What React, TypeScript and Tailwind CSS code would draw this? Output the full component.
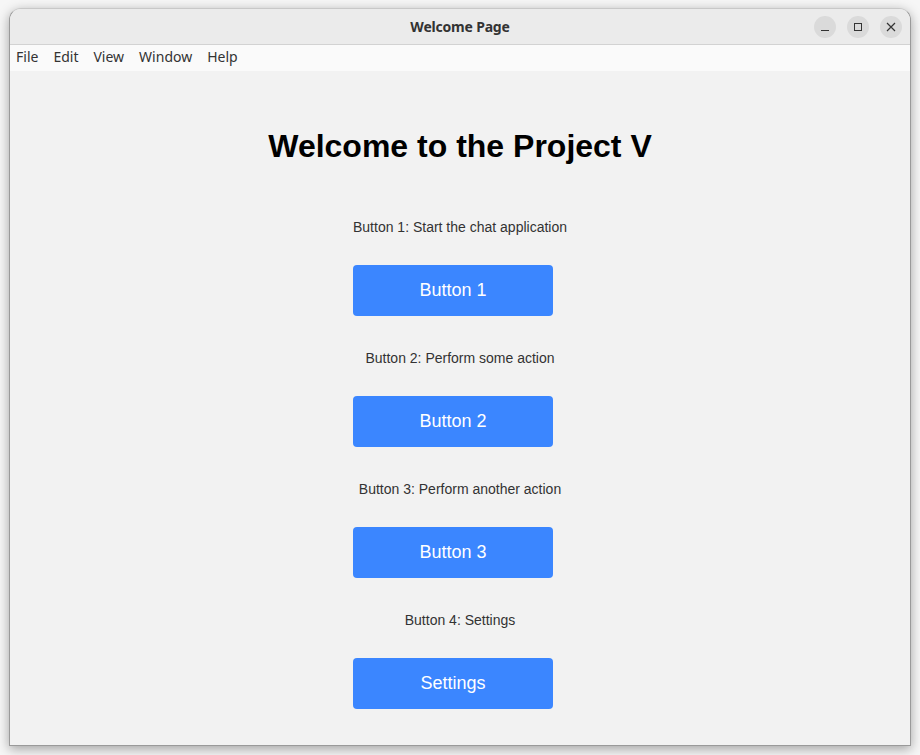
const items = [
  { label: "Button 1: Start the chat application", text: "Button 1" },
  { label: "Button 2: Perform some action", text: "Button 2" },
  { label: "Button 3: Perform another action", text: "Button 3" },
  { label: "Button 4: Settings", text: "Settings" },
];

const menus = ["File", "Edit", "View", "Window", "Help"];

export default function App() {
  return (
    <div className="h-[755px] w-[920px] overflow-hidden bg-[#f6f6f6] pl-[9px] pt-[8px]">
      <div className="flex h-[738px] w-[902px] flex-col overflow-hidden rounded-t-[12px] border border-[#9a9a9a] border-t-[#c8c8c8] bg-[#f2f2f2] shadow-[0_3px_12px_rgba(0,0,0,0.35)]">
        {/* title bar */}
        <div className="relative flex h-[36px] shrink-0 items-center justify-center border-b border-[#d2d2d2] bg-[#ebebeb]">
          <span className="font-['Noto_Sans',sans-serif] text-[14px] font-bold tracking-[-0.2px] text-[#333]">
            Welcome Page
          </span>
          <div className="absolute right-[8px] top-[7px] flex gap-[11px]">
            <div className="flex h-[22px] w-[22px] items-center justify-center rounded-full bg-[#dadada]">
              <div className="mt-[6px] h-[1px] w-[8px] bg-[#333]" />
            </div>
            <div className="flex h-[22px] w-[22px] items-center justify-center rounded-full bg-[#dadada]">
              <div className="h-[8px] w-[8px] border border-[#333]" />
            </div>
            <div className="flex h-[22px] w-[22px] items-center justify-center rounded-full bg-[#dadada]">
              <svg width="10" height="10" viewBox="0 0 10 10">
                <path d="M1 1L9 9M9 1L1 9" stroke="#333" strokeWidth="1.2" />
              </svg>
            </div>
          </div>
        </div>
        {/* menu bar */}
        <div className="flex h-[26px] shrink-0 items-center gap-[15px] bg-[#fafafa] pb-[3px] pl-[6px] font-['Noto_Sans',sans-serif] text-[14px] text-[#333]">
          {menus.map((m) => (
            <span key={m}>{m}</span>
          ))}
        </div>
        {/* content */}
        <div className="flex flex-1 flex-col items-center pt-[57px] font-['Liberation_Sans',Arial,sans-serif]">
          <h1 className="text-[32px] font-bold leading-[37px] text-black">Welcome to the Project V</h1>
          <div className="mt-[54px] flex flex-col items-center">
            {items.map((it) => (
              <div key={it.text} className="flex flex-col items-center">
                <p className="text-[14px] leading-[16px] text-[#333]">{it.label}</p>
                <button className="mb-[34px] mr-[14px] mt-[30px] h-[51px] w-[200px] rounded-[4px] bg-[#3b86ff] text-[18px] text-white">
                  {it.text}
                </button>
              </div>
            ))}
          </div>
        </div>
      </div>
    </div>
  );
}
